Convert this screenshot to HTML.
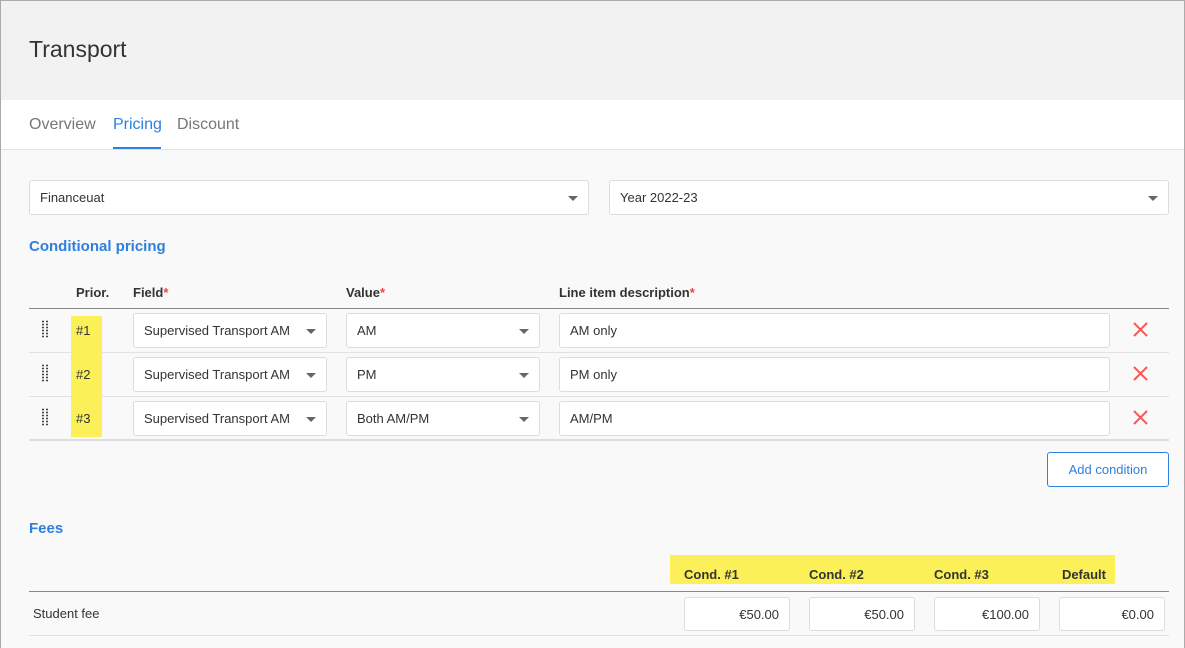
<!DOCTYPE html>
<html><head><style>
*{box-sizing:border-box;margin:0;padding:0}
body{width:1185px;height:648px;overflow:hidden;font-family:"Liberation Sans",sans-serif;color:#333;background:#f9f9f9;position:relative}
.frame{position:absolute;left:0;top:0;width:1185px;height:648px;border:1px solid #aaa;border-bottom:none}
.a{position:absolute}
.hdr{left:1px;top:1px;width:1183px;height:99px;background:#f2f2f2}
.tabs{left:1px;top:100px;width:1183px;height:50px;background:#fff;border-bottom:1px solid #e2e2e2}
.tab{top:116px;font-size:16px;color:#777}
.inp{background:#fff;border:1px solid #ddd;border-radius:3px;font-size:13px;color:#333;padding-left:10px;display:flex;align-items:center}
.car{position:absolute;right:10px;top:50%;margin-top:-2px;width:0;height:0;border-left:5px solid transparent;border-right:5px solid transparent;border-top:5px solid #666}
.th{font-size:13px;font-weight:bold;color:#333}
.req{color:#e44}
.blue{color:#2e7fe0;font-weight:bold;font-size:15px}
.hl{background:#fbf057}
.grip{width:7px;height:18px;background-image:radial-gradient(circle,#444 0.8px,transparent 1.1px);background-size:4px 3px;background-position:0 0}
.num{justify-content:flex-end;padding-right:10px;padding-left:0}
</style></head><body>
<div class="a hdr"></div>
<div class="a" style="left:29px;top:36px;font-size:23px;color:#333">Transport</div>
<div class="a tabs"></div>
<div class="a tab" style="left:29px">Overview</div>
<div class="a tab" style="left:113px;color:#2e7fe0">Pricing</div>
<div class="a" style="left:113px;top:147px;width:48px;height:2px;background:#2e7fe0"></div>
<div class="a tab" style="left:177px">Discount</div>

<div class="a inp" style="left:29px;top:180px;width:560px;height:35px">Financeuat<span class="car"></span></div>
<div class="a inp" style="left:609px;top:180px;width:560px;height:35px">Year 2022-23<span class="car"></span></div>

<div class="a blue" style="left:29px;top:238px">Conditional pricing</div>

<div class="a th" style="left:76px;top:285px">Prior.</div>
<div class="a th" style="left:133px;top:285px">Field<span class="req">*</span></div>
<div class="a th" style="left:346px;top:285px">Value<span class="req">*</span></div>
<div class="a th" style="left:559px;top:285px">Line item description<span class="req">*</span></div>
<div class="a" style="left:29px;top:308px;width:1140px;height:1px;background:#888"></div>
<div class="a" style="left:29px;top:352px;width:1140px;height:1px;background:#e2e2e2"></div>
<div class="a" style="left:29px;top:396px;width:1140px;height:1px;background:#e2e2e2"></div>
<div class="a" style="left:29px;top:439px;width:1140px;height:2px;background:#ddd"></div>
<div class="a hl" style="left:71px;top:316px;width:31px;height:121px"></div>

<svg class="a" style="left:1133px;top:322px" width="15" height="15" viewBox="0 0 15 15"><path d="M1 1L14 14M14 1L1 14" stroke="#f05a5a" stroke-width="2"/></svg>
<svg class="a" style="left:1133px;top:366px" width="15" height="15" viewBox="0 0 15 15"><path d="M1 1L14 14M14 1L1 14" stroke="#f05a5a" stroke-width="2"/></svg>
<svg class="a" style="left:1133px;top:410px" width="15" height="15" viewBox="0 0 15 15"><path d="M1 1L14 14M14 1L1 14" stroke="#f05a5a" stroke-width="2"/></svg>

<div class="a grip" style="left:41px;top:320px"></div>
<div class="a" style="left:76px;top:323px;font-size:13px">#1</div>
<div class="a inp" style="left:133px;top:313px;width:194px;height:35px">Supervised Transport AM<span class="car"></span></div>
<div class="a inp" style="left:346px;top:313px;width:194px;height:35px">AM<span class="car"></span></div>
<div class="a inp" style="left:559px;top:313px;width:551px;height:35px">AM only</div>

<div class="a grip" style="left:41px;top:364px"></div>
<div class="a" style="left:76px;top:367px;font-size:13px">#2</div>
<div class="a inp" style="left:133px;top:357px;width:194px;height:35px">Supervised Transport AM<span class="car"></span></div>
<div class="a inp" style="left:346px;top:357px;width:194px;height:35px">PM<span class="car"></span></div>
<div class="a inp" style="left:559px;top:357px;width:551px;height:35px">PM only</div>

<div class="a grip" style="left:41px;top:408px"></div>
<div class="a" style="left:76px;top:411px;font-size:13px">#3</div>
<div class="a inp" style="left:133px;top:401px;width:194px;height:35px">Supervised Transport AM<span class="car"></span></div>
<div class="a inp" style="left:346px;top:401px;width:194px;height:35px">Both AM/PM<span class="car"></span></div>
<div class="a inp" style="left:559px;top:401px;width:551px;height:35px">AM/PM</div>

<div class="a" style="left:1047px;top:452px;width:122px;height:35px;border:1px solid #2e7fe0;border-radius:3px;background:#fff;color:#2e7fe0;font-size:13px;display:flex;align-items:center;justify-content:center">Add condition</div>

<div class="a blue" style="left:29px;top:520px">Fees</div>
<div class="a hl" style="left:670px;top:555px;width:445px;height:29px"></div>
<div class="a th" style="left:684px;top:567px">Cond. #1</div>
<div class="a th" style="left:809px;top:567px">Cond. #2</div>
<div class="a th" style="left:934px;top:567px">Cond. #3</div>
<div class="a th" style="left:1059px;top:567px;width:47px;text-align:right">Default</div>
<div class="a" style="left:29px;top:591px;width:1140px;height:1px;background:#888"></div>
<div class="a" style="left:33px;top:606px;font-size:13px">Student fee</div>
<div class="a inp num" style="left:684px;top:597px;width:106px;height:34px">€50.00</div>
<div class="a inp num" style="left:809px;top:597px;width:106px;height:34px">€50.00</div>
<div class="a inp num" style="left:934px;top:597px;width:106px;height:34px">€100.00</div>
<div class="a inp num" style="left:1059px;top:597px;width:106px;height:34px">€0.00</div>
<div class="a" style="left:29px;top:635px;width:1140px;height:1px;background:#e2e2e2"></div>
<div class="frame"></div>
</body></html>
